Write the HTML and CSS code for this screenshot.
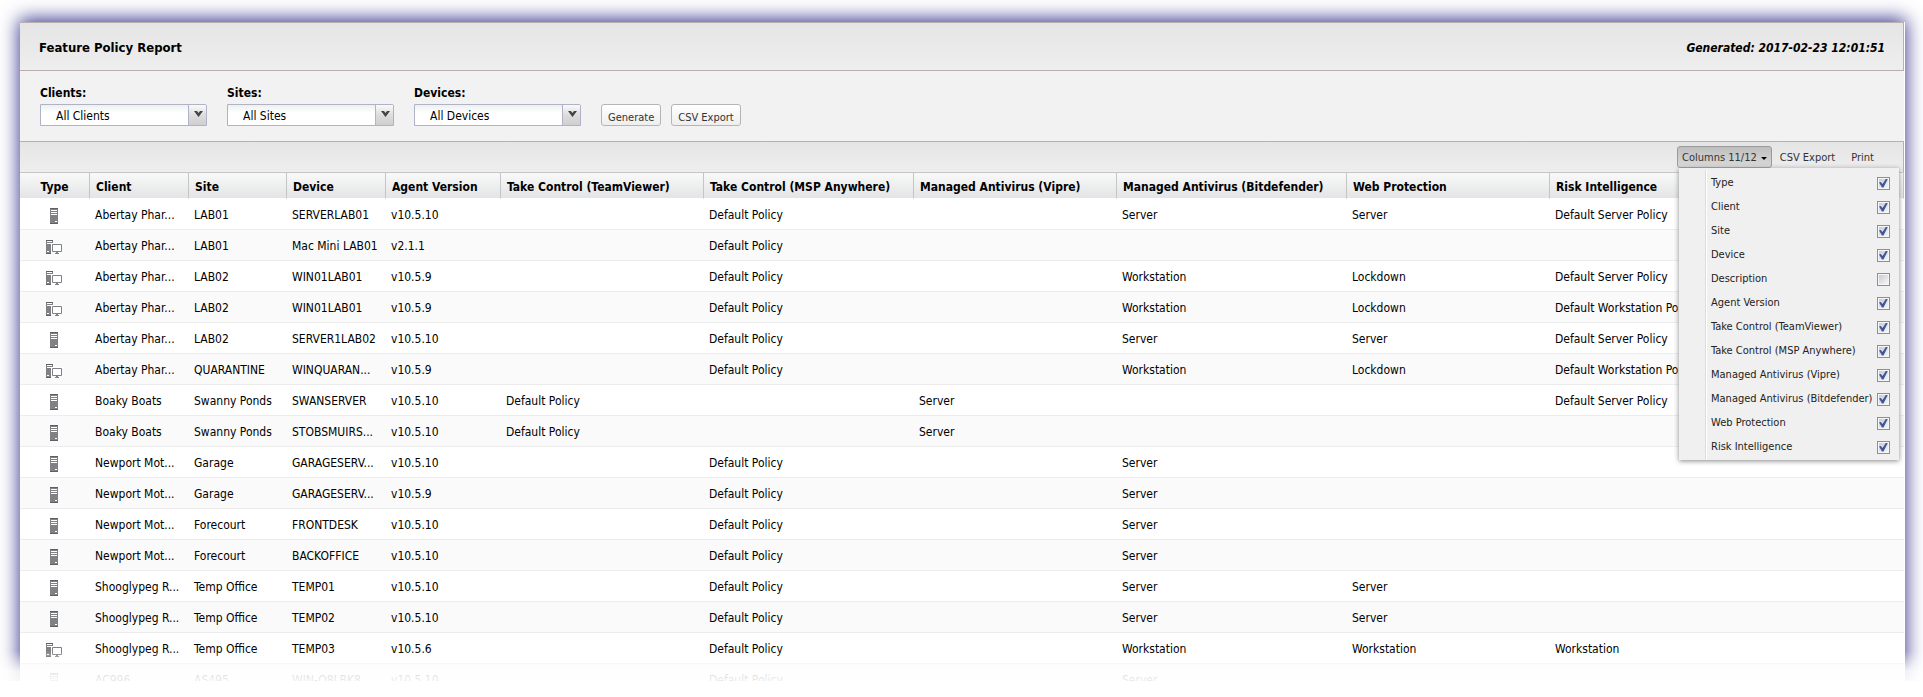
FILE: index.html
```
<!DOCTYPE html>
<html lang="en">
<head>
<meta charset="utf-8">
<title>Feature Policy Report</title>
<link rel="stylesheet" href="styles.css">
</head>
<body>
<svg class="defs" aria-hidden="true">
  <symbol id="server" viewBox="0 0 16 16">
    <path fill="#808184" d="M4 0h8v16H4z"/>
    <path fill="#fff" d="M5 2h6v1H5zM5 4h6v1H5zM5 6h6v1H5zM9 13h2v1H9z"/>
    <path fill="#5f6063" d="M4 0h8v1H4zM4 15h8v1H4z"/>
  </symbol>
  <symbol id="workstation" viewBox="0 0 16 16">
    <path fill="#808184" d="M0 1h7v3H5v11H0z"/>
    <path fill="#fff" d="M1 2h5v1H1zM1 4h4v1H1zM1 12h2v1H1z"/>
    <path fill="#5f6063" d="M0 1h7v1H0zM0 14h5v1H0z"/>
    <path fill="#fff" d="M5 4h11v9H5z"/>
    <path fill="none" stroke="#808184" d="M6.500 5.500h9v7h-9z"/>
    <path fill="#808184" d="M10 13h2v1h-2zM9 14h4v1H9z"/>
  </symbol>
</svg>
<div class="page">
<main class="panel">
  <header class="title-bar">
    <h1 class="title">Feature Policy Report</h1>
    <p class="generated">Generated: 2017-02-23 12:01:51</p>
  </header>

  <form class="filters">
    <div class="field">
      <label for="clients">Clients:</label>
      <div class="combo"><select id="clients"><option>All Clients</option></select></div>
    </div>
    <div class="field">
      <label for="sites">Sites:</label>
      <div class="combo"><select id="sites"><option>All Sites</option></select></div>
    </div>
    <div class="field">
      <label for="devices">Devices:</label>
      <div class="combo"><select id="devices"><option>All Devices</option></select></div>
    </div>
    <div class="actions">
      <button class="btn" type="button">Generate</button>
      <button class="btn" type="button">CSV Export</button>
    </div>
  </form>

  <div class="toolbar">
    <button class="tool tool-open" type="button" aria-expanded="true">Columns 11/12<span class="caret"></span></button>
    <button class="tool" type="button">CSV Export</button>
    <button class="tool" type="button">Print</button>
    <div class="menu">
      <label class="item">Type<input type="checkbox" checked></label>
      <label class="item">Client<input type="checkbox" checked></label>
      <label class="item">Site<input type="checkbox" checked></label>
      <label class="item">Device<input type="checkbox" checked></label>
      <label class="item">Description<input type="checkbox"></label>
      <label class="item">Agent Version<input type="checkbox" checked></label>
      <label class="item">Take Control (TeamViewer)<input type="checkbox" checked></label>
      <label class="item">Take Control (MSP Anywhere)<input type="checkbox" checked></label>
      <label class="item">Managed Antivirus (Vipre)<input type="checkbox" checked></label>
      <label class="item">Managed Antivirus (Bitdefender)<input type="checkbox" checked></label>
      <label class="item">Web Protection<input type="checkbox" checked></label>
      <label class="item">Risk Intelligence<input type="checkbox" checked></label>
    </div>
  </div>

  <table class="grid">
    <colgroup>
      <col class="c-type"><col class="c-name"><col class="c-site"><col class="c-name"><col class="c-version">
      <col class="c-policy"><col class="c-msp"><col class="c-policy"><col class="c-bit"><col class="c-policy"><col>
    </colgroup>
    <thead>
      <tr><th>Type</th><th>Client</th><th>Site</th><th>Device</th><th>Agent Version</th><th>Take Control (TeamViewer)</th><th>Take Control (MSP Anywhere)</th><th>Managed Antivirus (Vipre)</th><th>Managed Antivirus (Bitdefender)</th><th>Web Protection</th><th>Risk Intelligence</th></tr>
    </thead>
    <tbody>
      <tr><td><svg class="icon"><use href="#server"/></svg></td><td>Abertay Phar...</td><td>LAB01</td><td>SERVERLAB01</td><td>v10.5.10</td><td></td><td>Default Policy</td><td></td><td>Server</td><td>Server</td><td>Default Server Policy</td></tr>
      <tr><td><svg class="icon"><use href="#workstation"/></svg></td><td>Abertay Phar...</td><td>LAB01</td><td>Mac Mini LAB01</td><td>v2.1.1</td><td></td><td>Default Policy</td><td></td><td></td><td></td><td></td></tr>
      <tr><td><svg class="icon"><use href="#workstation"/></svg></td><td>Abertay Phar...</td><td>LAB02</td><td>WIN01LAB01</td><td>v10.5.9</td><td></td><td>Default Policy</td><td></td><td>Workstation</td><td>Lockdown</td><td>Default Server Policy</td></tr>
      <tr><td><svg class="icon"><use href="#workstation"/></svg></td><td>Abertay Phar...</td><td>LAB02</td><td>WIN01LAB01</td><td>v10.5.9</td><td></td><td>Default Policy</td><td></td><td>Workstation</td><td>Lockdown</td><td>Default Workstation Policy</td></tr>
      <tr><td><svg class="icon"><use href="#server"/></svg></td><td>Abertay Phar...</td><td>LAB02</td><td>SERVER1LAB02</td><td>v10.5.10</td><td></td><td>Default Policy</td><td></td><td>Server</td><td>Server</td><td>Default Server Policy</td></tr>
      <tr><td><svg class="icon"><use href="#workstation"/></svg></td><td>Abertay Phar...</td><td>QUARANTINE</td><td>WINQUARAN...</td><td>v10.5.9</td><td></td><td>Default Policy</td><td></td><td>Workstation</td><td>Lockdown</td><td>Default Workstation Policy</td></tr>
      <tr><td><svg class="icon"><use href="#server"/></svg></td><td>Boaky Boats</td><td>Swanny Ponds</td><td>SWANSERVER</td><td>v10.5.10</td><td>Default Policy</td><td></td><td>Server</td><td></td><td></td><td>Default Server Policy</td></tr>
      <tr><td><svg class="icon"><use href="#server"/></svg></td><td>Boaky Boats</td><td>Swanny Ponds</td><td>STOBSMUIRS...</td><td>v10.5.10</td><td>Default Policy</td><td></td><td>Server</td><td></td><td></td><td></td></tr>
      <tr><td><svg class="icon"><use href="#server"/></svg></td><td>Newport Mot...</td><td>Garage</td><td>GARAGESERV...</td><td>v10.5.10</td><td></td><td>Default Policy</td><td></td><td>Server</td><td></td><td></td></tr>
      <tr><td><svg class="icon"><use href="#server"/></svg></td><td>Newport Mot...</td><td>Garage</td><td>GARAGESERV...</td><td>v10.5.9</td><td></td><td>Default Policy</td><td></td><td>Server</td><td></td><td></td></tr>
      <tr><td><svg class="icon"><use href="#server"/></svg></td><td>Newport Mot...</td><td>Forecourt</td><td>FRONTDESK</td><td>v10.5.10</td><td></td><td>Default Policy</td><td></td><td>Server</td><td></td><td></td></tr>
      <tr><td><svg class="icon"><use href="#server"/></svg></td><td>Newport Mot...</td><td>Forecourt</td><td>BACKOFFICE</td><td>v10.5.10</td><td></td><td>Default Policy</td><td></td><td>Server</td><td></td><td></td></tr>
      <tr><td><svg class="icon"><use href="#server"/></svg></td><td>Shooglypeg R...</td><td>Temp Office</td><td>TEMP01</td><td>v10.5.10</td><td></td><td>Default Policy</td><td></td><td>Server</td><td>Server</td><td></td></tr>
      <tr><td><svg class="icon"><use href="#server"/></svg></td><td>Shooglypeg R...</td><td>Temp Office</td><td>TEMP02</td><td>v10.5.10</td><td></td><td>Default Policy</td><td></td><td>Server</td><td>Server</td><td></td></tr>
      <tr><td><svg class="icon"><use href="#workstation"/></svg></td><td>Shooglypeg R...</td><td>Temp Office</td><td>TEMP03</td><td>v10.5.6</td><td></td><td>Default Policy</td><td></td><td>Workstation</td><td>Workstation</td><td>Workstation</td></tr>
      <tr><td><svg class="icon"><use href="#server"/></svg></td><td>AC996</td><td>AS495</td><td>WIN-O8LBK8</td><td>v10.5.10</td><td></td><td>Default Policy</td><td></td><td>Server</td><td></td><td></td></tr>
    </tbody>
  </table>
</main>
</div>
</body>
</html>
```
FILE: styles.css
```
* { box-sizing: border-box; }

body {
  margin: 0;
  background: #fff;
  color: #000;
  font: 12px/16px "DejaVu Sans Condensed", "DejaVu Sans", sans-serif;
}

button, select, input { margin: 0; font: inherit; color: inherit; }

.defs { display: none; }

.page {
  position: relative;
  padding: 22px 18px 2px 20px;
  overflow: hidden;
}

/* The sheet dissolves into the page at its lower edge. */
.page::after {
  content: "";
  position: absolute;
  left: 0;
  right: 0;
  bottom: 0;
  height: 46px;
  background: linear-gradient(rgba(255, 255, 255, 0), rgba(255, 255, 255, .85) 20px, rgba(255, 255, 255, .92) 30px, #fff 30px);
  pointer-events: none;
}

.panel {
  padding-right: 1px;
  background: #fff;
  box-shadow: 0 -2px 18px 1px #38388f;
}

.title-bar {
  display: flex;
  align-items: center;
  justify-content: space-between;
  height: 49px;
  padding: 2px 18px 0 19px;
  border: 1px solid #bbaeae;
  border-left: 0;
  background: linear-gradient(#e5e5e5, #eee);
}

.title { margin: 0; font-size: 13px; font-weight: bold; }
.generated { margin: 0; font-weight: bold; font-style: italic; }

.filters {
  display: flex;
  align-items: flex-end;
  gap: 20px;
  padding: 14px 20px 15px;
  background: #f2f2f2;
}

.field { display: flex; flex-direction: column; gap: 3px; }
.field label { font-weight: bold; }

.combo { position: relative; }

.combo select {
  display: block;
  width: 167px;
  height: 22px;
  padding: 1px 20px 0 15px;
  appearance: none;
  border: 1px solid #b0b3c8;
  border-radius: 0 2px 0 0;
  background: linear-gradient(#eef0f0, #fff 8px);
}

.combo::before {
  content: "";
  position: absolute;
  top: 1px;
  right: 1px;
  bottom: 1px;
  width: 17px;
  border-left: 1px solid #b0b3c8;
  background: linear-gradient(#fafafa, #ddd 50%, #cfcfcf);
  pointer-events: none;
}

.combo::after {
  content: "";
  position: absolute;
  top: 7px;
  right: 4px;
  width: 9px;
  height: 6px;
  background: #444;
  clip-path: polygon(0 0, 3px 0, 50% 2px, 6px 0, 100% 0, 50% 100%);
  pointer-events: none;
}

.actions { display: flex; gap: 10px; }

.btn {
  height: 22px;
  padding: 5px 6px 0;
  border: 1px solid #b5b5b5;
  border-radius: 3px;
  background: linear-gradient(#fff, #eee);
  color: #333;
  font-size: 11px;
  line-height: 15px;
}

.toolbar {
  position: relative;
  display: flex;
  justify-content: flex-end;
  height: 31px;
  padding: 4px 21px 4px 0;
  border-top: 1px solid #bbaeae;
  border-right: 1px solid #bbaeae;
  background: linear-gradient(#e5e5e5, #eee);
}

.tool {
  height: 22px;
  padding: 2px 7px 0;
  border: 1px solid transparent;
  border-radius: 3px;
  background: none;
  color: #333;
  font-size: 11px;
}

.tool-open {
  padding: 2px 4px 0;
  border-color: #9a9a9a;
  background: linear-gradient(#bfbfbf, #d9d9d9);
}

.caret {
  display: inline-block;
  margin-left: 4px;
  border: 3px solid transparent;
  border-top-color: #000;
  border-bottom: 0;
  vertical-align: middle;
}

.menu {
  position: absolute;
  z-index: 1;
  top: 26px;
  right: 4px;
  width: 220px;
  padding: 3px 0 1px;
  background: linear-gradient(90deg, transparent 26px, #dcdcdc 26px, #dcdcdc 27px, #fff 27px, #fff 28px, transparent 28px) 0 2px no-repeat, #f0f0f0;
  box-shadow: 0 1px 5px #888;
}

.item {
  display: flex;
  align-items: center;
  justify-content: space-between;
  height: 24px;
  padding: 0 9px 0 32px;
  color: #222;
  font-size: 11px;
  white-space: nowrap;
}

.item input {
  width: 13px;
  height: 13px;
  padding: 1px;
  appearance: none;
  border: 1px solid #8e8f8f;
  background: linear-gradient(135deg, #c9ccd3, #f6f6f6) content-box, #f6f6f6;
}

.item input:checked::before {
  content: "";
  display: block;
  width: 9px;
  height: 9px;
  background: #3f569b;
  clip-path: polygon(0 45%, 20% 38%, 40% 62%, 78% 0, 100% 0, 50% 100%, 34% 100%);
}

.grid {
  width: 100%;
  table-layout: fixed;
  border-collapse: separate;
  border-spacing: 0;
  border-top: 1px solid #c5c5c5;
}

.c-type { width: 70px; }
.c-name { width: 99px; }
.c-site { width: 98px; }
.c-version { width: 115px; }
.c-policy { width: 203px; }
.c-msp { width: 210px; }
.c-bit { width: 230px; }

.grid th {
  height: 26px;
  padding: 2px 6px 0;
  border-right: 1px solid #c5c5c5;
  border-bottom: 1px solid #fff;
  background: linear-gradient(#f9f9f9, #e3e4e6);
  text-align: left;
  white-space: nowrap;
}

.grid th:first-child, .grid td:first-child { text-align: center; }

.grid td {
  height: 31px;
  padding: 2px 5px 0;
  border-bottom: 1px solid #ededed;
  overflow: hidden;
  white-space: nowrap;
}

.grid td:first-child { padding: 4px 7px 0 5px; }
.grid tbody tr:nth-child(even) { background: #fafafa; }

.icon { display: inline-block; width: 16px; height: 16px; vertical-align: middle; }
```
